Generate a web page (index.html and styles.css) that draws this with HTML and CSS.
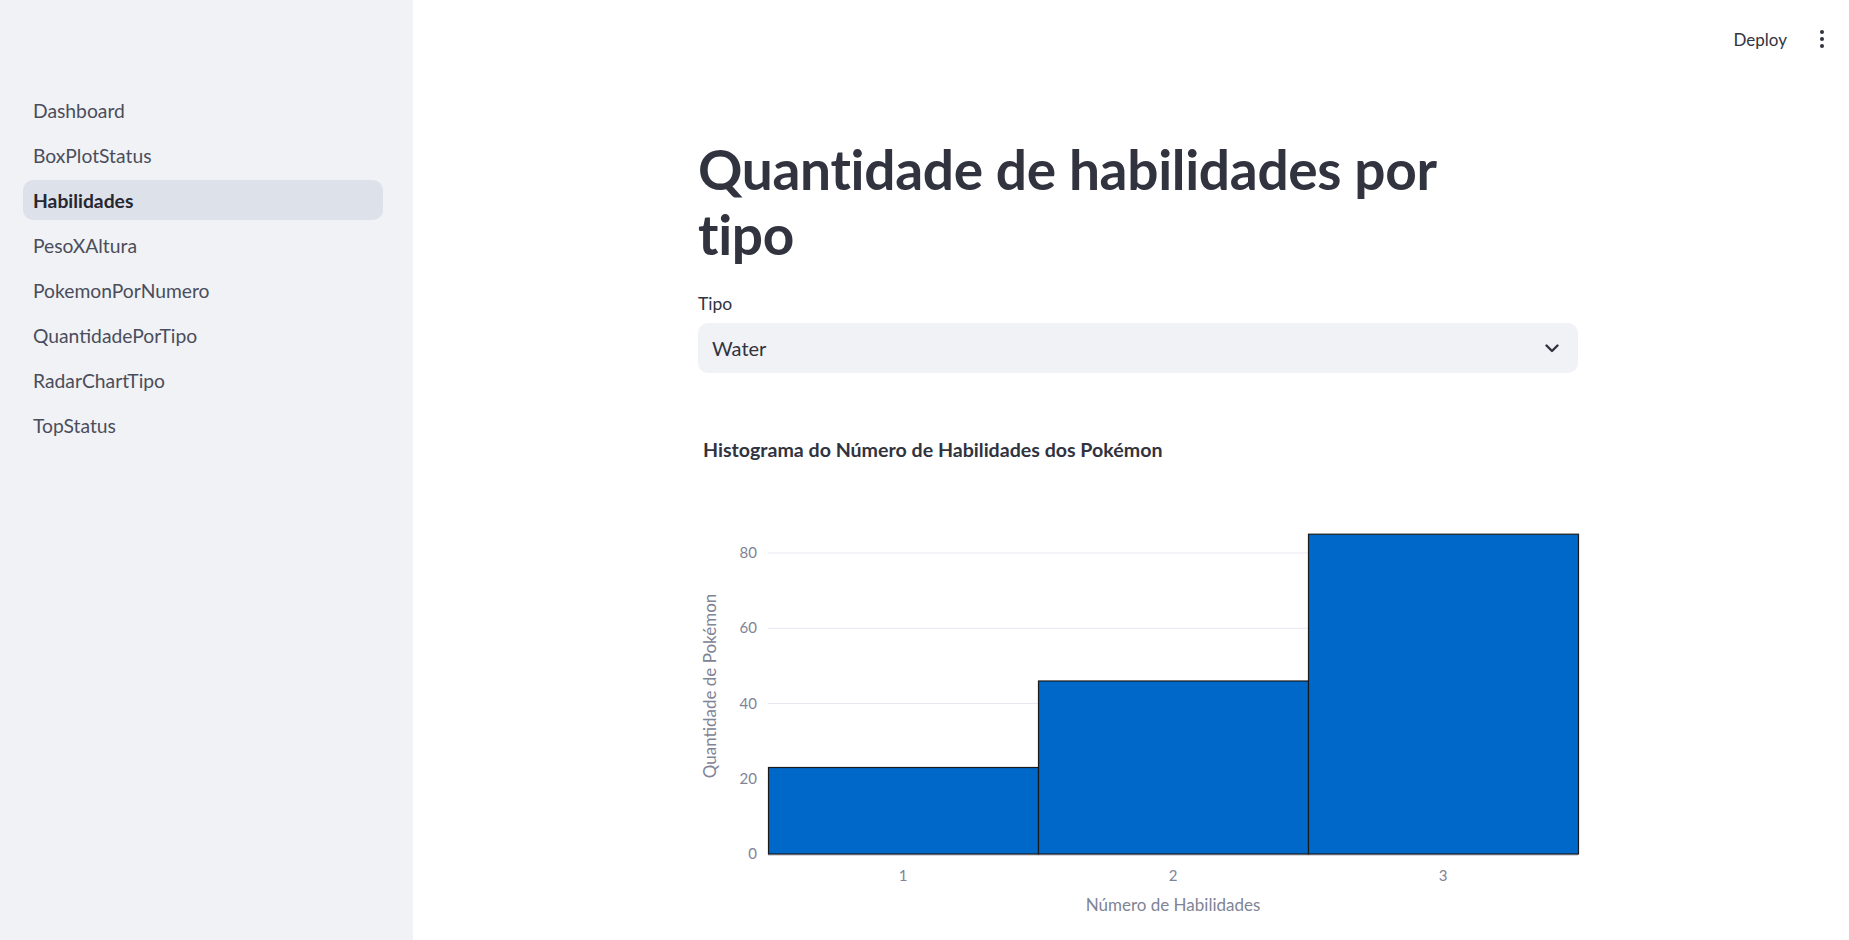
FILE: index.html
```html
<!DOCTYPE html>
<html lang="pt">
<head>
<meta charset="utf-8">
<title>Habilidades</title>
<link rel="stylesheet" href="styles.css">
</head>
<body>
<div class="app">
  <aside class="sidebar">
    <nav class="nav">
      <a class="nav-item">Dashboard</a>
      <a class="nav-item">BoxPlotStatus</a>
      <a class="nav-item active">Habilidades</a>
      <a class="nav-item">PesoXAltura</a>
      <a class="nav-item">PokemonPorNumero</a>
      <a class="nav-item">QuantidadePorTipo</a>
      <a class="nav-item">RadarChartTipo</a>
      <a class="nav-item">TopStatus</a>
    </nav>
  </aside>
  <main class="main">
    <header class="topbar">
      <span class="deploy">Deploy</span>
      <span class="kebab"><i></i><i></i><i></i></span>
    </header>
    <section class="content">
      <h1 class="title">Quantidade de habilidades por<br>tipo</h1>
      <label class="field-label">Tipo</label>
      <div class="select">
        <span class="select-value">Water</span>
        <svg class="chevron" width="14" height="9" viewBox="0 0 14 9"><path d="M1.5 1.5 L7 7 L12.5 1.5" fill="none" stroke="#31333F" stroke-width="2.4" stroke-linecap="round" stroke-linejoin="round"/></svg>
      </div>
      <div class="chart">
        <svg width="882" height="530" viewBox="0 0 882 530">
          <text class="chart-title" x="5" y="47">Histograma do Número de Habilidades dos Pokémon</text>
          <g class="grid">
            <line x1="70" x2="880" y1="368.75" y2="368.75"/>
            <line x1="70" x2="880" y1="293.5" y2="293.5"/>
            <line x1="70" x2="880" y1="218.25" y2="218.25"/>
            <line x1="70" x2="880" y1="143" y2="143"/>
          </g>
          <line class="zero" x1="70" x2="880" y1="445" y2="445"/>
          <g class="bars">
            <rect x="70.5" y="357.5" width="270" height="86.5"/>
            <rect x="340.5" y="271" width="270" height="173"/>
            <rect x="610.5" y="124.2" width="270" height="319.8"/>
          </g>
          <g class="ytick">
            <text x="59" y="449">0</text>
            <text x="59" y="373.75">20</text>
            <text x="59" y="298.5">40</text>
            <text x="59" y="223.25">60</text>
            <text x="59" y="148">80</text>
          </g>
          <g class="xtick">
            <text x="205" y="471">1</text>
            <text x="475" y="471">2</text>
            <text x="745" y="471">3</text>
          </g>
          <text class="axis-title" x="475" y="501" text-anchor="middle">Número de Habilidades</text>
          <text class="axis-title" x="0" y="0" text-anchor="middle" transform="translate(18 276) rotate(-90)">Quantidade de Pokémon</text>
        </svg>
      </div>
    </section>
  </main>
</div>
</body>
</html>
```
FILE: styles.css
```css
* { box-sizing: border-box; }
html, body { margin: 0; padding: 0; height: 100%; }
body {
  font-family: "Lato", "Noto Sans", sans-serif;
  color: #31333F;
  background: #ffffff;
  overflow: hidden;
}
.app {
  display: flex;
  height: 100vh;
}
.sidebar {
  width: 413px;
  flex: 0 0 413px;
  background: #f0f2f6;
  padding: 90px 30px 0 23px;
}
.nav {
  display: flex;
  flex-direction: column;
  gap: 5px;
}
.nav-item {
  display: flex;
  align-items: center;
  height: 40px;
  padding-left: 10px;
  border-radius: 10px;
  font-size: 19.3px;
  color: #4b4d5b;
  cursor: pointer;
}
.nav-item.active {
  background: #dde1ea;
  color: #262730;
  font-weight: 700;
}
.main {
  flex: 1;
  display: flex;
  flex-direction: column;
  min-width: 0;
}
.topbar {
  height: 80px;
  display: flex;
  align-items: center;
  justify-content: flex-end;
  padding: 0 25px 2px 0;
  gap: 33px;
}
.deploy {
  font-size: 17px;
  color: #31333F;
}
.kebab {
  display: flex;
  flex-direction: column;
  gap: 3px;
}
.kebab i {
  display: block;
  width: 4px;
  height: 4px;
  border-radius: 50%;
  background: #31333F;
}
.content {
  width: 880px;
  margin-left: calc((100% - 880px + 14px) / 2);
  padding-top: 57px;
  display: flex;
  flex-direction: column;
}
.title {
  margin: 0;
  font-size: 55px;
  line-height: 65px;
  font-weight: 700;
  color: #31333F;
  letter-spacing: -0.3px;
}
.field-label {
  margin-top: 26px;
  font-size: 17.5px;
  line-height: 22px;
  color: #31333F;
}
.select {
  margin-top: 8px;
  height: 50px;
  background: #f0f2f6;
  border-radius: 10px;
  display: flex;
  align-items: center;
  justify-content: space-between;
  padding: 0 19px 0 14px;
}
.select-value {
  font-size: 20px;
  color: #31333F;
}
.chart {
  margin-top: 37px;
}
.chart svg { display: block; }
.chart-title {
  font-family: "Lato", "Noto Sans", sans-serif;
  font-weight: 700;
  font-size: 19.6px;
  fill: #31333F;
}
.grid line { stroke: #e6e9ef; stroke-width: 1; }
.zero { stroke: #d5d8e0; stroke-width: 2; }
.bars rect { fill: #0068c9; stroke: #1a1a1a; stroke-width: 1.2; }
.ytick text {
  font-family: "Lato", "Noto Sans", sans-serif;
  font-size: 15px;
  fill: #808495;
  text-anchor: end;
}
.xtick text {
  font-family: "Lato", "Noto Sans", sans-serif;
  font-size: 15px;
  fill: #808495;
  text-anchor: middle;
}
.axis-title {
  font-family: "Lato", "Noto Sans", sans-serif;
  font-size: 17px;
  fill: #808495;
}
```
